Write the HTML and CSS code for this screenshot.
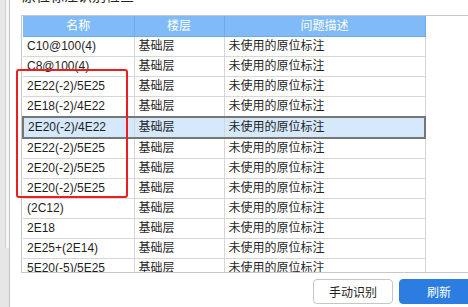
FILE: index.html
```html
<!DOCTYPE html>
<html lang="zh-CN">
<head>
  <meta charset="UTF-8">
  <meta name="viewport" content="width=device-width, initial-scale=1.0">
  <title>原位标注检查</title>
  <link rel="stylesheet" href="styles.css">
</head>
<body>
  <div class="dialog">
    <div class="side-bar">
      <div class="side-thumb"></div>
    </div>
    <div class="panel">
      <div class="panel-title"><span>原位标注识别检查</span></div>
      <div class="grid-box">
        <table class="grid">
          <colgroup>
            <col class="col-name">
            <col class="col-floor">
            <col class="col-desc">
          </colgroup>
          <thead>
            <tr><th>名称</th><th>楼层</th><th>问题描述</th></tr>
          </thead>
          <tbody>
            <tr><td>C10@100(4)</td><td>基础层</td><td>未使用的原位标注</td></tr>
            <tr><td>C8@100(4)</td><td>基础层</td><td>未使用的原位标注</td></tr>
            <tr><td>2E22(-2)/5E25</td><td>基础层</td><td>未使用的原位标注</td></tr>
            <tr><td>2E18(-2)/4E22</td><td>基础层</td><td>未使用的原位标注</td></tr>
            <tr class="selected"><td>2E20(-2)/4E22</td><td>基础层</td><td>未使用的原位标注</td></tr>
            <tr><td>2E22(-2)/5E25</td><td>基础层</td><td>未使用的原位标注</td></tr>
            <tr><td>2E20(-2)/5E25</td><td>基础层</td><td>未使用的原位标注</td></tr>
            <tr><td>2E20(-2)/5E25</td><td>基础层</td><td>未使用的原位标注</td></tr>
            <tr><td>(2C12)</td><td>基础层</td><td>未使用的原位标注</td></tr>
            <tr><td>2E18</td><td>基础层</td><td>未使用的原位标注</td></tr>
            <tr><td>2E25+(2E14)</td><td>基础层</td><td>未使用的原位标注</td></tr>
            <tr><td>5E20(-5)/5E25</td><td>基础层</td><td>未使用的原位标注</td></tr>
          </tbody>
        </table>
      </div>
      <div class="footer">
        <button type="button" class="btn">手动识别</button>
        <button type="button" class="btn btn-primary">刷新</button>
      </div>
    </div>
    <!-- 标记框 -->
    <div class="mark"></div>
  </div>
</body>
</html>
```

FILE: styles.css
```css
html, body {
  margin: 0;
  padding: 0;
  overflow: hidden;
  background: #fff;
}
.dialog {
  position: relative;
  display: flex;
  width: 492px;
  height: 307px;
  font-family: 'Liberation Sans', 'Noto Sans CJK SC', sans-serif;
  font-size: 12px;
  color: #1f1f1f;
}
.side-bar {
  width: 9px;
  background: #e6e6e6;
  border-right: 1px solid #c2c2c2;
  display: flex;
  justify-content: flex-end;
}
.side-thumb {
  width: 3px;
  height: 248px;
  background: #f6f6f6;
  border-left: 1px solid #d0d0d0;
}
.panel {
  flex: 1;
  display: flex;
  flex-direction: column;
  padding-left: 11px;
}
.panel-title {
  height: 15px;
  overflow: hidden;
}
.panel-title span {
  display: block;
  margin-top: -13px;
  margin-left: 1px;
  font-size: 14px;
  line-height: 18px;
  color: #222;
}
.grid-box {
  height: 258px;
  box-sizing: border-box;
  border: 1px solid #c8c8c8;
  border-right: none;
  overflow: hidden;
}
.grid {
  table-layout: fixed;
  width: 402px;
  border-collapse: collapse;
}
.col-name {
  width: 111px;
}
.col-floor {
  width: 90px;
}
.col-desc {
  width: 201px;
}
.grid th {
  height: 20px;
  padding: 0;
  background: #80bbf7;
  color: #fff;
  font-weight: normal;
  line-height: 20px;
  text-align: center;
  border-right: 1px solid #6ea9ea;
  border-bottom: 1px solid #6ea9ea;
}
.grid td {
  height: 19px;
  padding: 0 4px;
  line-height: 19px;
  white-space: nowrap;
  overflow: hidden;
  border-right: 1px solid #d6d6d6;
  border-bottom: 1px solid #d6d6d6;
}
.grid tr.selected td {
  background: #d5e8fc;
  border-top: 2px solid #767676;
  border-bottom: 2px solid #767676;
}
.grid tr.selected td:first-child {
  border-left: 2px solid #767676;
}
.grid tr.selected td:last-child {
  border-right: 2px solid #767676;
}
.footer {
  display: flex;
  justify-content: flex-end;
  gap: 6px;
  padding-top: 6px;
  padding-right: 13px;
}
.btn {
  width: 80px;
  height: 25px;
  padding: 0;
  font-family: inherit;
  font-size: 12px;
  color: #1f1f1f;
  background: #fff;
  border: 1px solid #c6c6c6;
  border-radius: 4px;
}
.btn-primary {
  color: #fff;
  background: #2b7de1;
  border-color: #2b7de1;
}
.mark {
  position: absolute;
  left: 16px;
  top: 69px;
  width: 112px;
  height: 129px;
  box-sizing: border-box;
  border: 2px solid #ea1f1f;
  border-radius: 3px;
}
```
